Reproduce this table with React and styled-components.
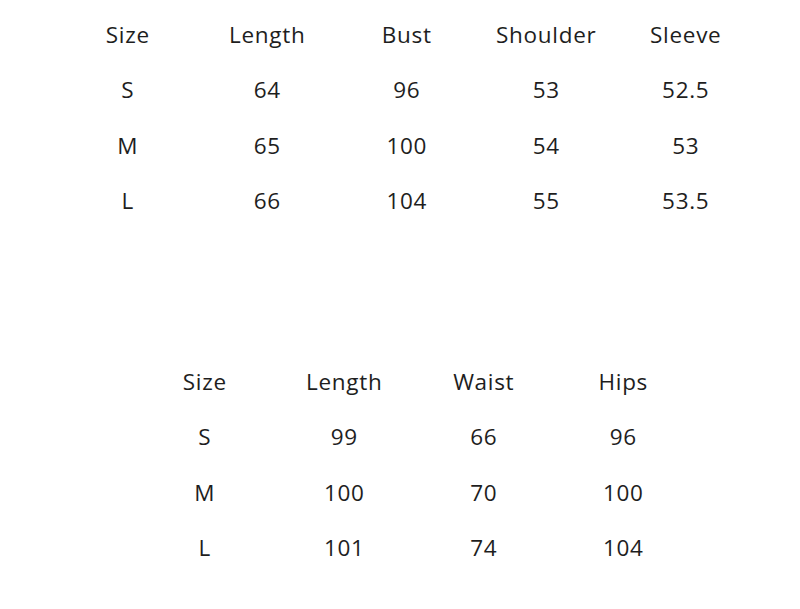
import React from "react";
import styled, { createGlobalStyle } from "styled-components";

const Global = createGlobalStyle`
  html, body { margin: 0; padding: 0; background: #fff; }
  body { font-family: "Open Sans", "Noto Sans", sans-serif; color: #1e1e1e; }
`;

const Page = styled.div`
  width: 800px;
  height: 609px;
  display: flex;
  flex-direction: column;
  padding-top: 7px;
  box-sizing: border-box;
`;

const Table = styled.div`
  display: grid;
  grid-template-columns: repeat(${(p) => p.$cols}, 139.5px);
  grid-auto-rows: 55.5px;
  margin-left: ${(p) => p.$left}px;
  margin-top: ${(p) => p.$top || 0}px;
`;

const Cell = styled.div`
  display: flex;
  align-items: center;
  justify-content: center;
  font-size: 22.5px;
  letter-spacing: 0.7px;
  line-height: 1;
`;

const top = [
  ["Size", "Length", "Bust", "Shoulder", "Sleeve"],
  ["S", "64", "96", "53", "52.5"],
  ["M", "65", "100", "54", "53"],
  ["L", "66", "104", "55", "53.5"],
];

const bottom = [
  ["Size", "Length", "Waist", "Hips"],
  ["S", "99", "66", "96"],
  ["M", "100", "70", "100"],
  ["L", "101", "74", "104"],
];

function SizeTable({ rows, left, topGap }) {
  return (
    <Table $cols={rows[0].length} $left={left} $top={topGap}>
      {rows.flat().map((c, i) => (
        <Cell key={i}>{c}</Cell>
      ))}
    </Table>
  );
}

export default function App() {
  return (
    <>
      <Global />
      <Page>
        <SizeTable rows={top} left={58} />
        <SizeTable rows={bottom} left={135} topGap={125} />
      </Page>
    </>
  );
}
